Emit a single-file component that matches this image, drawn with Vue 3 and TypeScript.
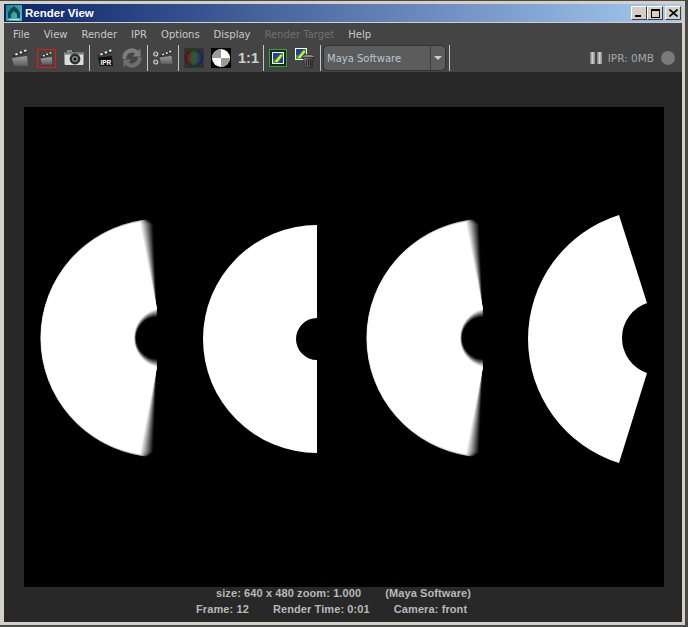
<script setup lang="ts">
const menus = ['File', 'View', 'Render', 'IPR', 'Options', 'Display', 'Render Target', 'Help']

// motion blurred sector: the average of a few frames between two key poses
const FRAMES = 24

function lerp(a: number, b: number, t: number): number {
  return a + (b - a) * t
}

function blurFrame(t: number): string {
  const cy = 231
  const tipX = lerp(116, 129, t)
  const tipH = lerp(116, 114, t) + 14 * t * (1 - t)
  const left = lerp(17, 16, t)
  const s = tipX - left
  const r = (tipH * tipH + s * s) / (2 * s)
  const innerX = 133
  const innerH = lerp(29, 21, t)
  const holeS = innerX - lerp(110, 112, t)
  const hole = (innerH * innerH + holeS * holeS) / (2 * holeS)
  return `M${tipX} ${cy - tipH}A${r} ${r} 0 0 0 ${tipX} ${cy + tipH}L${innerX} ${cy + innerH}A${hole} ${hole} 0 0 1 ${innerX} ${cy - innerH}Z`
}

const frames = Array.from({ length: FRAMES }, (_, i) => ({
  d: blurFrame(i / (FRAMES - 1)),
  opacity: 1 / (i + 1),
}))
</script>

<template>
  <div class="window">
    <div class="frame">
      <div class="title">
        <svg class="title__logo" viewBox="0 0 16 16">
          <rect width="16" height="16" fill="url(#logoBg)" />
          <path d="M2 13V8C3 4 6 3 8 1c2 2 5 3 6 7v5h-3V9L8 6 5 9v4Z" fill="#0d4a58" />
          <rect x="3" y="14" width="10" height="1" fill="#bfe3e0" />
        </svg>
        <span class="title__text">Render View</span>
        <div class="title__buttons">
          <button class="wbtn"><span class="wbtn__min"></span></button>
          <button class="wbtn"><span class="wbtn__max"></span></button>
          <button class="wbtn wbtn--close">
            <svg viewBox="0 0 9 8" width="9" height="8"><path d="M0.500 0.500l8 7M8.500 0.500l-8 7" stroke="#000" stroke-width="1.600" /></svg>
          </button>
        </div>
      </div>

      <div class="menu">
        <span v-for="m in menus" :key="m" class="menu__item" :class="{ 'menu__item--off': m === 'Render Target' }">{{ m }}</span>
      </div>

      <div class="toolbar">
        <svg class="tool" viewBox="0 0 20 20"><use href="#clapper" /></svg>
        <div class="tool tool--red">
          <svg viewBox="0 0 20 20" width="15" height="15"><use href="#clapper" /></svg>
        </div>
        <svg class="tool" viewBox="0 0 20 20">
          <rect x="3" y="2" width="5" height="3" fill="#8a8a8a" />
          <rect x="0.500" y="4" width="19" height="13" rx="1" fill="#dcdcdc" />
          <rect x="0.500" y="4" width="19" height="2.500" fill="#777" />
          <circle cx="11" cy="11" r="5.400" fill="#2b2b2b" />
          <circle cx="11" cy="11" r="3" fill="#8a8a8a" />
          <circle cx="11" cy="11" r="1.500" fill="#151515" />
          <rect x="4" y="5" width="2" height="2" fill="#3cd060" />
        </svg>
        <span class="sep"></span>
        <svg class="tool" viewBox="0 0 20 20">
          <use href="#clapper-top" />
          <path d="M3 9.500 17 8l1 10H5Z" fill="#111" />
          <text x="10.800" y="16.500" class="ipr" text-anchor="middle">IPR</text>
        </svg>
        <svg class="tool" viewBox="0 0 20 20">
          <path d="M2.500 11a7.500 7.500 0 0 1 12.500-6.500" fill="none" stroke="#7c7c7c" stroke-width="4" />
          <path d="M18.500 0.500v8h-8Z" fill="#7c7c7c" />
          <path d="M17.500 9a7.500 7.500 0 0 1-12.500 6.500" fill="none" stroke="#6e6e6e" stroke-width="4" />
          <path d="M1.500 19.500v-8h8Z" fill="#6e6e6e" />
        </svg>
        <span class="sep"></span>
        <svg class="tool" viewBox="0 0 20 20">
          <circle cx="2.700" cy="6" r="2" fill="#555" stroke="#ccc" stroke-width="1.200" />
          <circle cx="2.700" cy="14" r="2" fill="#555" stroke="#ccc" stroke-width="1.200" />
          <g transform="translate(5 1.500) scale(.8)"><use href="#clapper" /></g>
        </svg>
        <span class="sep"></span>
        <svg class="tool" viewBox="0 0 20 20">
          <rect width="20" height="20" fill="#333" />
          <clipPath id="ball"><circle cx="10" cy="10" r="9.300" /></clipPath>
          <g clip-path="url(#ball)">
            <rect width="7" height="20" fill="#6b2a2a" />
            <rect x="7" width="6.500" height="20" fill="#2a5a30" />
            <rect x="13.500" width="6.500" height="20" fill="#2b3a72" />
            <circle cx="10" cy="10" r="9.300" fill="url(#ballShade)" />
          </g>
        </svg>
        <svg class="tool" viewBox="0 0 20 20">
          <rect width="20" height="20" fill="#000" />
          <circle cx="10" cy="10" r="9" fill="#fff" />
          <path d="M10 1a9 9 0 0 0-9 9H10Z" fill="#9a9a9a" />
          <path d="M10 19a9 9 0 0 0 9-9H10Z" fill="#9a9a9a" />
        </svg>
        <span class="tool tool--text">1:1</span>
        <span class="sep"></span>
        <div class="tool tool--green">
          <svg viewBox="0 0 12 12" width="12" height="12"><use href="#picture" /></svg>
        </div>
        <svg class="tool" viewBox="0 0 20 20">
          <svg x="0" y="0" width="12" height="12" viewBox="0 0 12 12"><use href="#picture" /></svg>
          <ellipse cx="13.500" cy="8.500" rx="6" ry="2" fill="#8a8a8a" stroke="#1c1c1c" stroke-width=".6" />
          <path d="M8.500 9.500 10 19.500h7l1.500-10Z" fill="url(#trash)" stroke="#1c1c1c" stroke-width=".6" />
          <path d="M11.200 11.500v7M13.500 11.500v7M15.800 11.500v7" stroke="#222" stroke-width="1" />
        </svg>
        <span class="sep"></span>
        <div class="drop">
          <span class="drop__text">Maya Software</span>
          <span class="drop__arrow"></span>
        </div>
        <span class="sep sep--tight"></span>

        <div class="ipr-state">
          <span class="pause"></span>
          <span class="pause"></span>
          <span class="ipr-state__text">IPR: 0MB</span>
          <span class="ipr-state__dot"></span>
        </div>
      </div>

      <div class="content">
        <svg class="view" viewBox="0 0 640 480" width="640" height="480">
          <g v-for="x in [0, 326]" :key="x" :transform="`translate(${x} 0)`">
            <path v-for="(f, i) in frames" :key="i" :d="f.d" fill="#fff" :fill-opacity="f.opacity" />
          </g>
          <path d="M293 118A114 114 0 0 0 293 346V253A21 21 0 0 1 293 211Z" fill="#fff" />
          <path d="M595 108A130 130 0 0 0 595 356L623 266A37 37 0 0 1 623 196Z" fill="#fff" />
        </svg>

        <div class="status">
          <div class="status__line status__line--top">
            <span>size: 640 x 480 zoom: 1.000</span>
            <span>(Maya Software)</span>
          </div>
          <div class="status__line status__line--bottom">
            <span>Frame: 12</span>
            <span>Render Time: 0:01</span>
            <span>Camera: front</span>
          </div>
        </div>
      </div>
    </div>

    <svg class="defs" width="0" height="0">
      <defs>
        <linearGradient id="logoBg" x1="0" y1="0" x2="1" y2="1">
          <stop offset="0" stop-color="#1f7f86" />
          <stop offset="1" stop-color="#5cc0bc" />
        </linearGradient>
        <linearGradient id="board" x1="0" y1="0" x2="0" y2="1">
          <stop offset="0" stop-color="#a0a0a0" />
          <stop offset="1" stop-color="#5c5c5c" />
        </linearGradient>
        <linearGradient id="trash" x1="0" y1="0" x2="1" y2="0">
          <stop offset="0" stop-color="#7a7a7a" />
          <stop offset="1" stop-color="#3a3a3a" />
        </linearGradient>
        <radialGradient id="ballShade">
          <stop offset="0.550" stop-color="#000" stop-opacity="0" />
          <stop offset="1" stop-color="#000" stop-opacity=".5" />
        </radialGradient>
        <g id="clapper-top">
          <path d="M2 7.500 16.500 1.500l1.200 3L3 10.200Z" fill="#333" />
          <path d="M5 5.800l2.200-.9.800 1.800-2.200.9ZM9.400 4l2.200-.9.800 1.800-2.200.9ZM13.800 2.200l2.200-.9.800 1.800-2.200.9Z" fill="#eee" />
        </g>
        <g id="clapper">
          <use href="#clapper-top" />
          <path d="M2 10 17 8l1 10H4Z" fill="url(#board)" />
        </g>
        <g id="picture">
          <rect width="12" height="12" fill="#fff" />
          <rect x="1" y="1" width="10" height="10" fill="#1a3cc0" />
          <path d="M1 11V6.500L3 7.500 9 1h2v3L6 11Z" fill="#2f9a2f" />
          <path d="M2.500 10 8.500 2.500l2 1L5.500 10Z" fill="#f0e020" />
        </g>
      </defs>
    </svg>
  </div>
</template>

<style scoped>
.window {
  width: 688px;
  height: 627px;
  box-sizing: border-box;
  padding: 1px 3px 2px 0;
  background-color: #4a4a4a;
  overflow: hidden;
}

.frame {
  height: 100%;
  box-sizing: border-box;
  border: 3px solid #d4d0c8;
  border-left-width: 4px;
  display: flex;
  flex-direction: column;
  background-color: #444;
}

.defs {
  position: absolute;
}

/*
  * Title
*/

.title {
  height: 19px;
  box-sizing: border-box;
  flex: none;
  display: flex;
  align-items: center;
  border-bottom: 1px solid #d4d0c8;
  background: linear-gradient(90deg, #0a246a, #a6caf0);
}

.title__logo {
  width: 16px;
  height: 16px;
  margin-left: 2px;
}

.title__text {
  margin-left: 3px;
  color: #fff;
  font: bold 11.5px "Liberation Sans", sans-serif;
}

.title__buttons {
  margin-left: auto;
  display: flex;
  padding-right: 1px;
}

.wbtn {
  width: 16px;
  height: 14px;
  padding: 0;
  display: flex;
  align-items: center;
  justify-content: center;
  position: relative;
  background-color: #d4d0c8;
  border: 1px solid;
  border-color: #fff #404040 #404040 #fff;
}

.wbtn--close {
  margin-left: 2px;
}

.wbtn__min {
  position: absolute;
  left: 3px;
  bottom: 2px;
  width: 6px;
  height: 2px;
  background-color: #000;
}

.wbtn__max {
  width: 9px;
  height: 9px;
  box-sizing: border-box;
  border: 1px solid #000;
  border-top-width: 2px;
}

/*
  * Menu
*/

.menu {
  height: 21px;
  box-sizing: border-box;
  padding-top: 2px;
  flex: none;
  display: flex;
  align-items: center;
  gap: 14px;
  padding-left: 9px;
  font: 10px "DejaVu Sans", sans-serif;
  color: #c8c8c8;
}

.menu__item--off {
  color: #707070;
}

/*
  * Toolbar
*/

.toolbar {
  height: 28px;
  flex: none;
  display: flex;
  align-items: center;
  padding-left: 6px;
  padding-right: 7px;
}

.tool {
  width: 20px;
  height: 20px;
  flex: none;
  margin-left: 7px;
}

.toolbar > .tool:first-child {
  margin-left: 0;
}

.sep {
  width: 1px;
  height: 26px;
  flex: none;
  margin: 0 5px;
  background-color: #c4c4c4;
}

.sep + .tool {
  margin-left: 0;
}

.sep--tight {
  margin-left: 3px;
}

.tool--red,
.tool--green {
  box-sizing: border-box;
  display: flex;
  align-items: center;
  justify-content: center;
}

.tool--red {
  width: 19px;
  height: 19px;
  margin-right: 1px;
  border: 1px solid #f01515;
}

.tool--green {
  width: 18px;
  height: 18px;
  margin-left: 1px;
  margin-right: 1px;
  border: 1px solid #1fb32a;
  background-color: #222;
}

.tool--text {
  height: auto;
  color: #cfcfcf;
  font: bold 14.5px "Liberation Sans", sans-serif;
  text-align: center;
  white-space: nowrap;
}

.ipr {
  font: bold 6.5px "Liberation Sans", sans-serif;
  fill: #fff;
}

.drop {
  width: 123px;
  height: 26px;
  box-sizing: border-box;
  flex: none;
  margin-left: -3px;
  display: flex;
  align-items: center;
  justify-content: space-between;
  background-color: #5c5c5c;
  border: 1px solid #333;
  border-radius: 5px;
}

.drop__text {
  padding-left: 3px;
  color: #b9c6d4;
  font: 10px "DejaVu Sans", sans-serif;
}

.drop__arrow {
  width: 15px;
  height: 100%;
  box-sizing: border-box;
  border-left: 1px solid #3c3c3c;
  display: flex;
  align-items: center;
  justify-content: center;
}

.drop__arrow::after {
  content: "";
  border-left: 4px solid transparent;
  border-right: 4px solid transparent;
  border-top: 4px solid #cfcfcf;
}

.ipr-state {
  margin-left: auto;
  display: flex;
  align-items: center;
}

.pause {
  width: 5px;
  height: 12px;
  margin-right: 2px;
  background: linear-gradient(90deg, #777, #ccc 50%, #888);
}

.ipr-state__text {
  margin-left: 4px;
  color: #a8a8a8;
  font: 10.5px "DejaVu Sans", sans-serif;
}

.ipr-state__dot {
  width: 14px;
  height: 14px;
  margin-left: 7px;
  border-radius: 50%;
  background-color: #7a7a7a;
}

/*
  * Content
*/

.content {
  flex: 1;
  background-color: #282828;
  padding: 35px 0 0 20px;
  min-height: 0;
}

.view {
  display: block;
  background-color: #000;
}

.status {
  margin-left: -20px;
  margin-top: -2px;
  color: #b8b8b8;
  font: bold 11px "Liberation Sans", sans-serif;
  letter-spacing: 0.1px;
}

.status__line {
  height: 16px;
  display: flex;
  align-items: center;
  gap: 24px;
}

.status__line--top {
  padding-left: 212px;
}

.status__line--bottom {
  padding-left: 192px;
}
</style>

<style>
body {
  background-color: #4a4a4a;
}
</style>
